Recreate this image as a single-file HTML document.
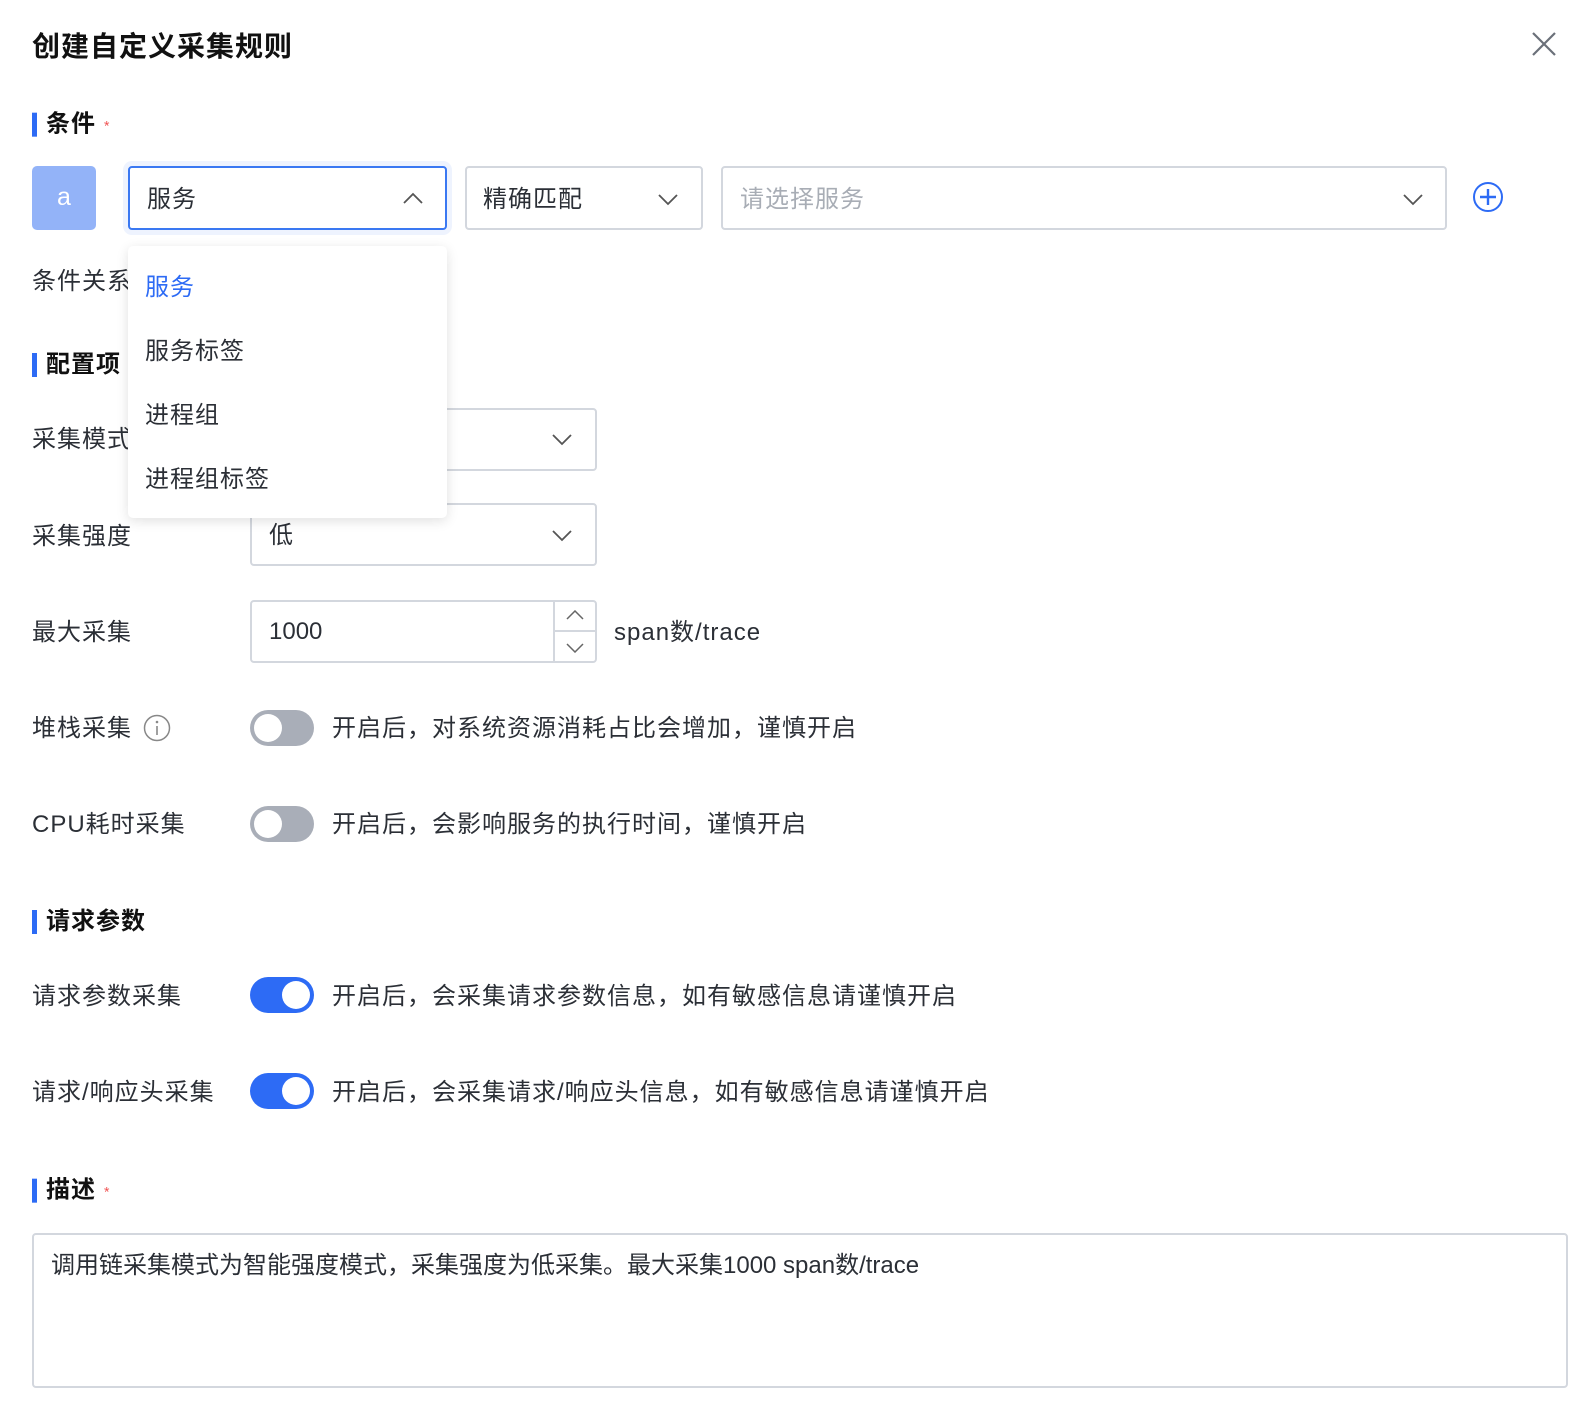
<!DOCTYPE html>
<html><head><meta charset="utf-8"><style>
*{box-sizing:border-box;margin:0;padding:0}
body{width:1594px;height:1420px;background:#fff;position:relative;overflow:hidden;font-family:"Liberation Sans","Noto Sans CJK SC",sans-serif;color:#2b2f36}
.a{position:absolute;white-space:nowrap}
.t{font-size:24px;letter-spacing:1px;line-height:30px;transform:translateY(-50%)}
.sec{font-size:24px;letter-spacing:1px;font-weight:bold;color:#111;padding-left:14px;line-height:28px;transform:translateY(-50%)}
.sec:before{content:"";position:absolute;left:0;top:2px;width:5px;height:24px;background:#2d6bf5}
.req{color:#f05050;font-size:14px;font-weight:normal;margin-left:8px;vertical-align:middle}
.box{position:absolute;border:2px solid #d3d7de;border-radius:4px;background:#fff}
.chev{position:absolute;width:20px;height:12px}
.tg{position:absolute;width:64px;height:36px;border-radius:18px;background:#a9aeb8}
.tg:after{content:"";position:absolute;top:4px;left:4px;width:28px;height:28px;border-radius:50%;background:#fff}
.tg.on{background:#2d6bf5}.tg.on:after{left:32px}
</style></head><body>
<div class="a" style="left:32px;top:45px;transform:translateY(-50%);font-size:28px;letter-spacing:1px;font-weight:bold;color:#111">创建自定义采集规则</div>
<svg class="a" style="left:1532px;top:32px" width="24" height="24" viewBox="0 0 24 24"><path d="M1 1L23 23M23 1L1 23" stroke="#6b7079" stroke-width="2.2"/></svg>

<div class="a sec" style="left:32px;top:125px">条件<span class="req">*</span></div>
<div class="a" style="left:32px;top:166px;width:64px;height:64px;border-radius:5px;background:#93b3f8;color:#fff;font-size:25px;line-height:62px;text-align:center">a</div>
<div class="box" style="left:128px;top:166px;width:319px;height:64px;border-color:#3a78f2;box-shadow:0 0 0 5px #eef3fe"></div>
<div class="a t" style="left:147px;top:200px">服务</div>
<svg class="chev" style="left:403px;top:192px" viewBox="0 0 20 12"><path d="M1 11L10 2L19 11" fill="none" stroke="#555" stroke-width="1.8"/></svg>
<div class="box" style="left:465px;top:166px;width:238px;height:64px"></div>
<div class="a t" style="left:483px;top:200px">精确匹配</div>
<svg class="chev" style="left:658px;top:194px" viewBox="0 0 20 12"><path d="M1 1L10 10L19 1" fill="none" stroke="#555" stroke-width="1.8"/></svg>
<div class="box" style="left:721px;top:166px;width:726px;height:64px"></div>
<div class="a t" style="left:740px;top:200px;color:#a8adb5">请选择服务</div>
<svg class="chev" style="left:1403px;top:194px" viewBox="0 0 20 12"><path d="M1 1L10 10L19 1" fill="none" stroke="#555" stroke-width="1.8"/></svg>
<svg class="a" style="left:1472px;top:181px" width="32" height="32" viewBox="0 0 32 32"><circle cx="16" cy="16" r="14" fill="none" stroke="#2d6bf5" stroke-width="2"/><path d="M16 8V24M8 16H24" stroke="#2d6bf5" stroke-width="2.4"/></svg>

<div class="a t" style="left:32px;top:282px">条件关系</div>

<div class="a sec" style="left:32px;top:365px">配置项</div>
<div class="a t" style="left:32px;top:440px">采集模式</div>
<div class="box" style="left:250px;top:408px;width:347px;height:63px"></div>
<svg class="chev" style="left:552px;top:434px" viewBox="0 0 20 12"><path d="M1 1L10 10L19 1" fill="none" stroke="#555" stroke-width="1.8"/></svg>

<div class="a t" style="left:32px;top:537px">采集强度</div>
<div class="box" style="left:250px;top:503px;width:347px;height:63px"></div>
<div class="a t" style="left:269px;top:536px">低</div>
<svg class="chev" style="left:552px;top:530px" viewBox="0 0 20 12"><path d="M1 1L10 10L19 1" fill="none" stroke="#555" stroke-width="1.8"/></svg>

<div class="a t" style="left:32px;top:633px">最大采集</div>
<div class="box" style="left:250px;top:600px;width:347px;height:63px"></div>
<div class="a" style="left:553px;top:601px;width:2px;height:61px;background:#d3d7de"></div>
<div class="a" style="left:554px;top:630px;width:42px;height:2px;background:#d3d7de"></div>
<svg class="a" style="left:566px;top:610px" width="18" height="10" viewBox="0 0 18 10"><path d="M1 9L9 1L17 9" fill="none" stroke="#666" stroke-width="1.5"/></svg>
<svg class="a" style="left:566px;top:643px" width="18" height="10" viewBox="0 0 18 10"><path d="M1 1L9 9L17 1" fill="none" stroke="#666" stroke-width="1.5"/></svg>
<div class="a t" style="left:269px;top:632px;letter-spacing:0">1000</div>
<div class="a t" style="left:614px;top:633px">span数/trace</div>

<div class="a t" style="left:32px;top:729px">堆栈采集</div>
<svg class="a" style="left:143px;top:714px" width="28" height="28" viewBox="0 0 28 28"><circle cx="14" cy="14" r="12.5" fill="none" stroke="#888" stroke-width="1.5"/><path d="M14 12V21" stroke="#888" stroke-width="1.6"/><circle cx="14" cy="8" r="1.3" fill="#888"/></svg>
<div class="tg" style="left:250px;top:710px"></div>
<div class="a t" style="left:332px;top:729px">开启后，对系统资源消耗占比会增加，谨慎开启</div>

<div class="a t" style="left:32px;top:825px">CPU耗时采集</div>
<div class="tg" style="left:250px;top:806px"></div>
<div class="a t" style="left:332px;top:825px">开启后，会影响服务的执行时间，谨慎开启</div>

<div class="a sec" style="left:32px;top:922px">请求参数</div>
<div class="a t" style="left:32px;top:997px">请求参数采集</div>
<div class="tg on" style="left:250px;top:977px"></div>
<div class="a t" style="left:332px;top:997px">开启后，会采集请求参数信息，如有敏感信息请谨慎开启</div>

<div class="a t" style="left:32px;top:1093px">请求/响应头采集</div>
<div class="tg on" style="left:250px;top:1073px"></div>
<div class="a t" style="left:332px;top:1093px">开启后，会采集请求/响应头信息，如有敏感信息请谨慎开启</div>

<div class="a sec" style="left:32px;top:1191px">描述<span class="req">*</span></div>
<div class="box" style="left:32px;top:1233px;width:1536px;height:155px"></div>
<div class="a t" style="left:51px;top:1266px;font-size:24px;letter-spacing:0">调用链采集模式为智能强度模式，采集强度为低采集。最大采集1000 span数/trace</div>

<div class="a" style="left:128px;top:246px;width:319px;height:272px;background:#fff;border-radius:5px;box-shadow:0 3px 12px rgba(0,0,0,.12)"></div>
<div class="a t" style="left:145px;top:288px;color:#2d6bf5">服务</div>
<div class="a t" style="left:145px;top:352px">服务标签</div>
<div class="a t" style="left:145px;top:416px">进程组</div>
<div class="a t" style="left:145px;top:480px">进程组标签</div>
</body></html>
